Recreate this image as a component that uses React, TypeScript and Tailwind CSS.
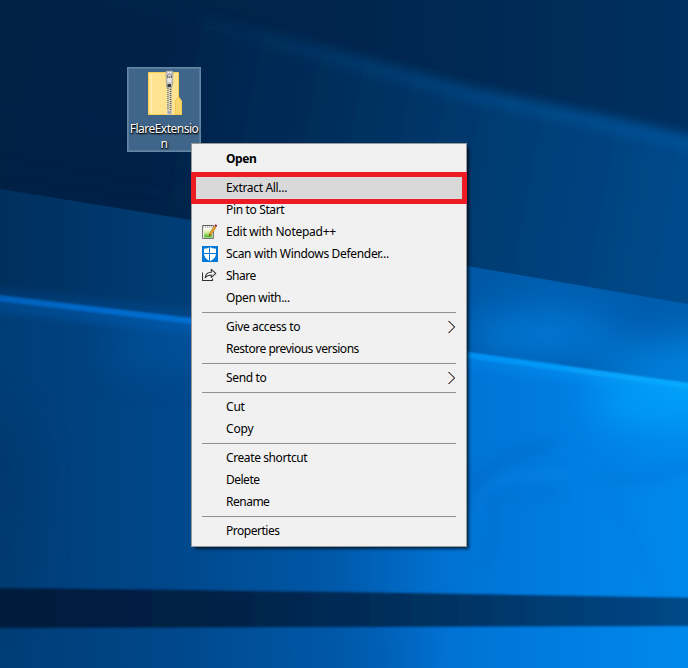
import React from "react";

function Wallpaper() {
  return (
    <svg className="absolute inset-0 h-full w-full" viewBox="0 0 688 668" preserveAspectRatio="none">
      <defs>
        <linearGradient id="sky" x1="0" x2="1"><stop offset="0" stopColor="#002246" /><stop offset=".5" stopColor="#00254c" /><stop offset="1" stopColor="#003060" /></linearGradient>
        <linearGradient id="ray" gradientUnits="userSpaceOnUse" x1="0" y1="0" x2="688" y2="130"><stop offset="0" stopColor="#002044" /><stop offset=".28" stopColor="#00244b" /><stop offset=".52" stopColor="#002f5d" /><stop offset=".8" stopColor="#003f78" /><stop offset="1" stopColor="#00488a" /></linearGradient>
        <linearGradient id="beam" gradientUnits="userSpaceOnUse" x1="180" y1="0" x2="640" y2="0"><stop offset="0" stopColor="#0064b4" stopOpacity="0" /><stop offset="1" stopColor="#0064b4" stopOpacity=".5" /></linearGradient>
        <linearGradient id="mid" x1="0" x2="1"><stop offset="0" stopColor="#002f5c" /><stop offset=".28" stopColor="#003e78" /><stop offset=".65" stopColor="#0056a2" /><stop offset=".8" stopColor="#005fb0" /><stop offset="1" stopColor="#005cac" /></linearGradient>
        <linearGradient id="floor" x1="0" x2="1"><stop offset="0" stopColor="#003d76" /><stop offset=".25" stopColor="#00478a" /><stop offset=".48" stopColor="#0058a8" /><stop offset=".66" stopColor="#0073d5" /><stop offset=".82" stopColor="#007de0" /><stop offset="1" stopColor="#0089eb" /></linearGradient>
        <linearGradient id="edge" gradientUnits="userSpaceOnUse" x1="0" y1="0" x2="688" y2="0"><stop offset="0" stopColor="#0062bc" /><stop offset=".28" stopColor="#0074da" /><stop offset=".7" stopColor="#0092f4" /><stop offset="1" stopColor="#10acff" /></linearGradient>
        <linearGradient id="band" x1="0" x2="1"><stop offset="0" stopColor="#001c3c" /><stop offset=".3" stopColor="#002145" /><stop offset=".6" stopColor="#00305e" /><stop offset="1" stopColor="#00498a" /></linearGradient>
        <filter id="b1" filterUnits="userSpaceOnUse" x="-50" y="-50" width="800" height="800"><feGaussianBlur stdDeviation="1" /></filter>
        <filter id="b4" filterUnits="userSpaceOnUse" x="-80" y="-80" width="850" height="850"><feGaussianBlur stdDeviation="6" /></filter>
        <filter id="b20" filterUnits="userSpaceOnUse" x="-150" y="-150" width="1000" height="1000"><feGaussianBlur stdDeviation="20" /></filter>
        <clipPath id="midClip"><path d="M0 189L191 220L467 266L688 304V384L467 352L191 318L0 295Z" /></clipPath>
        <clipPath id="floorClip"><path d="M0 295L191 318L467 352L688 384V668H0Z" /></clipPath>
      </defs>
      <rect width="688" height="668" fill="url(#sky)" />
      <path d="M-60 -50L140 0L344 51L470 88L608 120L760 155V340H-60Z" fill="url(#ray)" filter="url(#b4)" />
      <path d="M140 4L344 60L470 94L608 123L750 156" fill="none" stroke="url(#beam)" strokeWidth="12" filter="url(#b4)" />
      <path d="M-40 130L190 170L190 225L-40 190Z" fill="#001e43" opacity=".3" filter="url(#b20)" />
      <path d="M0 189L191 220L467 266L688 304V668H0Z" fill="url(#mid)" />
      <g clipPath="url(#midClip)">
        <ellipse cx="540" cy="335" rx="80" ry="18" fill="#0088f0" opacity=".75" filter="url(#b20)" />
        <path d="M600 355L760 320V430L600 380Z" fill="#0090f2" opacity=".7" filter="url(#b20)" />
        <path d="M-30 292L210 318" stroke="#0068c4" strokeWidth="8" opacity=".35" filter="url(#b4)" />
      </g>
      <path d="M0 295L191 318L467 352L688 384V668H0Z" fill="url(#floor)" />
      <path d="M-20 296L191 321L467 355L710 389" fill="none" stroke="url(#edge)" strokeWidth="6" filter="url(#b1)" />
      <g clipPath="url(#floorClip)">
        <path d="M-20 303L191 327L467 361L740 398" fill="none" stroke="url(#edge)" strokeWidth="8" opacity=".55" filter="url(#b4)" />
        <ellipse cx="660" cy="400" rx="70" ry="24" fill="#00aaff" opacity=".75" filter="url(#b20)" />
        <ellipse cx="165" cy="345" rx="60" ry="18" fill="#0062b4" opacity=".5" filter="url(#b20)" />
        <ellipse cx="0" cy="510" rx="40" ry="100" fill="#003469" opacity=".4" filter="url(#b20)" />
        <path d="M465 480Q500 445 560 438Q545 456 510 464Q485 475 475 507Z" fill="#0064bd" opacity=".3" filter="url(#b4)" />
        <path d="M478 512Q482 477 520 475L570 474" fill="none" stroke="#168cf2" strokeWidth="6" opacity=".35" filter="url(#b4)" />
        <path d="M485 570Q497 535 493 505Q500 492 562 494" fill="none" stroke="#0062bb" strokeWidth="5" opacity=".3" filter="url(#b4)" />
        <path d="M600 475Q650 490 720 450" fill="none" stroke="#006bcb" strokeWidth="8" opacity=".35" filter="url(#b4)" />
        <path d="M610 500Q640 550 662 598" fill="none" stroke="#006bcb" strokeWidth="6" opacity=".2" filter="url(#b4)" />
        <path d="M410 630L395 690H310L345 625Z" fill="#004c94" opacity=".2" filter="url(#b20)" />
      </g>
      <path d="M-10 588L344 592L700 598V626L344 627L-10 628Z" fill="url(#band)" filter="url(#b1)" />
    </svg>
  );
}

function ZipFolder() {
  return (
    <svg className="h-12 w-12" viewBox="0 0 48 48">
      <path d="M8.5 2.5H38.5V44.5H8.5Z" fill="#fee391" stroke="#f8d056" />
      <path d="M11.5 4V43" stroke="#fff0b8" />
      <path d="M35.5 44.5V31L38.5 26.5L41.5 31V44.5Z" fill="#f9d66e" stroke="#f4c94d" />
      <path d="M27 14H32V44H27Z" fill="#d8cda9" />
      <path d="M28 16V43" stroke="#77736b" strokeWidth="1.5" strokeDasharray="1 1" />
      <path d="M30.5 17V43" stroke="#625f59" strokeWidth="1.5" strokeDasharray="1 1" />
      <path d="M29.3 16V43" stroke="#f6f6f2" strokeWidth=".8" strokeDasharray="1 1" />
      <path d="M26 2Q26 1 27 1H32Q33 1 33 2L32.5 15L31.5 18H27L26.5 15Z" fill="#c9c9c9" stroke="#969696" strokeWidth=".7" />
      <path d="M28 2H31L31.5 12H27.5Z" fill="#e5e5e5" />
      <path d="M27.5 8V5Q29.5 2.5 31.5 5V8" fill="none" stroke="#777" />
      <rect x="28.5" y="6" width="2" height="2" fill="#777" />
      <rect x="27.5" y="14" width="3.5" height="3" fill="#393939" />
      <rect x="27.5" y="40.5" width="4" height="4" fill="#aaa" stroke="#ddd" strokeWidth=".5" />
    </svg>
  );
}

function NotepadIcon() {
  return (
    <svg className="h-4 w-4" viewBox="0 0 16 16">
      <defs><linearGradient id="note" x1="0" y1="0" x2="0" y2="1"><stop stopColor="#fff" /><stop offset=".45" stopColor="#d9ed9b" /><stop offset="1" stopColor="#43b51f" /></linearGradient></defs>
      <path d="M.5 1.5H11.5V14.5H.5Z" fill="#eee" stroke="#777" />
      <path d="M2 4H10.5V13.5H2Z" fill="url(#note)" />
      <path d="M1 1.5H11" stroke="#444" strokeDasharray="1 1" />
      <path d="M1 3H11" stroke="#aaa" strokeDasharray="1 1" />
      <path d="M7.5 9.5L12 2L14 3.5L9 11L7 12Z" fill="#e7a42b" stroke="#a86a14" strokeWidth=".5" />
      <path d="M7.5 10L9 11L7 12Z" fill="#5b3e22" />
      <path d="M12.5 2L13.5 .3L15.2 1.2L14.3 3Z" fill="#8c1921" />
    </svg>
  );
}

function DefenderIcon() {
  return (
    <svg className="h-4 w-4" viewBox="0 0 16 16">
      <path fill="#0078d7" d="M0 0H16V16H0Z" />
      <path fill="#fff" d="M8 1Q10 2.7 14 2.7V7.5Q14 12.5 8 15.2Q2 12.5 2 7.5V2.7Q6 2.7 8 1Z" />
      <path stroke="#0078d7" d="M7.5 1V15.5M2 7.5H14" />
    </svg>
  );
}

function ShareIcon() {
  return (
    <svg className="h-4 w-4" viewBox="0 0 16 16" fill="none" stroke="#333" strokeWidth="1.1">
      <path d="M.5 4.5V12.5H10.5V10.5" />
      <path d="M3.2 9.7Q3.7 4.2 9.3 4.2V1.3L13.8 5.3L9.3 9.3V7Q5.5 6.9 3.2 9.7Z" strokeLinejoin="round" />
    </svg>
  );
}

type RowProps = { label: string; text: string; icon?: React.ReactNode; arrow?: boolean; bold?: boolean; highlighted?: boolean };

function MenuRow({ label, text, icon, arrow, bold, highlighted }: RowProps) {
  return (
    <div className={`flex h-[22px] w-full items-center pl-[10px] pr-[10px] ${highlighted ? "bg-[#d9d9d9]" : ""}`}>
      <div className="flex h-[22px] w-6 shrink-0 items-center">{icon}</div>
      <span className={`whitespace-nowrap leading-[22px] ${text} ${bold ? "font-bold" : ""}`}>{label}</span>
      {arrow && (
        <svg className="ml-auto h-[14px] w-[9px]" viewBox="0 0 9 14" fill="none">
          <path d="M1 1L7 7L1 13" stroke="#e9a64c" />
          <path d="M2 1L8 7L2 13" stroke="#348bd0" />
          <path d="M1.5 1L7.5 7L1.5 13" stroke="#4c2530" strokeWidth=".9" />
        </svg>
      )}
    </div>
  );
}

function Separator() {
  return <div className="h-[7px] px-[10px] pt-[3px]"><div className="h-px bg-[#919191]" /></div>;
}

export default function App() {
  return (
    <main className="relative h-[668px] w-[688px] overflow-hidden bg-[#00244b] font-['Noto_Sans','Open_Sans',sans-serif] text-[12px] text-black">
      <Wallpaper />
      <div className="absolute left-[127px] top-[67px] flex h-[85px] w-[74px] flex-col items-center border border-[#6587a5] bg-[#40658a] pt-[2px] outline-1 -outline-offset-2 outline-[#56799a]">
        <ZipFolder />
        <div className="mt-[3px] w-[71px] break-all text-center text-[12px] leading-[15px] tracking-[-0.5px] text-white [text-shadow:1px_1px_2px_#000,0_1px_1px_#000]">FlareExtension</div>
      </div>
      <div className="absolute left-[191px] top-[143px] h-[404px] w-[276px] border border-[#999] bg-[#f1f1f1] py-1 shadow-[3px_3px_3px_-1px_rgba(0,0,0,0.65)]">
        <MenuRow label="Open" text="tracking-[-0.4px]" bold />
        <Separator />
        <MenuRow label="Extract All..." text="tracking-[-0.32px]" highlighted />
        <MenuRow label="Pin to Start" text="tracking-[-0.35px]" />
        <MenuRow label="Edit with Notepad++" text="tracking-[-0.25px]" icon={<NotepadIcon />} />
        <MenuRow label="Scan with Windows Defender..." text="tracking-[-0.32px]" icon={<DefenderIcon />} />
        <MenuRow label="Share" text="tracking-[-0.5px]" icon={<ShareIcon />} />
        <MenuRow label="Open with..." text="tracking-[-0.35px]" />
        <Separator />
        <MenuRow label="Give access to" text="tracking-[-0.35px]" arrow />
        <MenuRow label="Restore previous versions" text="tracking-[-0.47px]" />
        <Separator />
        <MenuRow label="Send to" text="tracking-[-0.35px]" arrow />
        <Separator />
        <MenuRow label="Cut" text="tracking-[-0.2px]" />
        <MenuRow label="Copy" text="tracking-[-0.2px]" />
        <Separator />
        <MenuRow label="Create shortcut" text="tracking-[-0.4px]" />
        <MenuRow label="Delete" text="tracking-[-0.5px]" />
        <MenuRow label="Rename" text="tracking-[-0.5px]" />
        <Separator />
        <MenuRow label="Properties" text="tracking-[-0.48px]" />
      </div>
      <div className="absolute left-[191px] top-[172px] h-8 w-[276px] border-[5px] border-[#ed1c24]" />
    </main>
  );
}
